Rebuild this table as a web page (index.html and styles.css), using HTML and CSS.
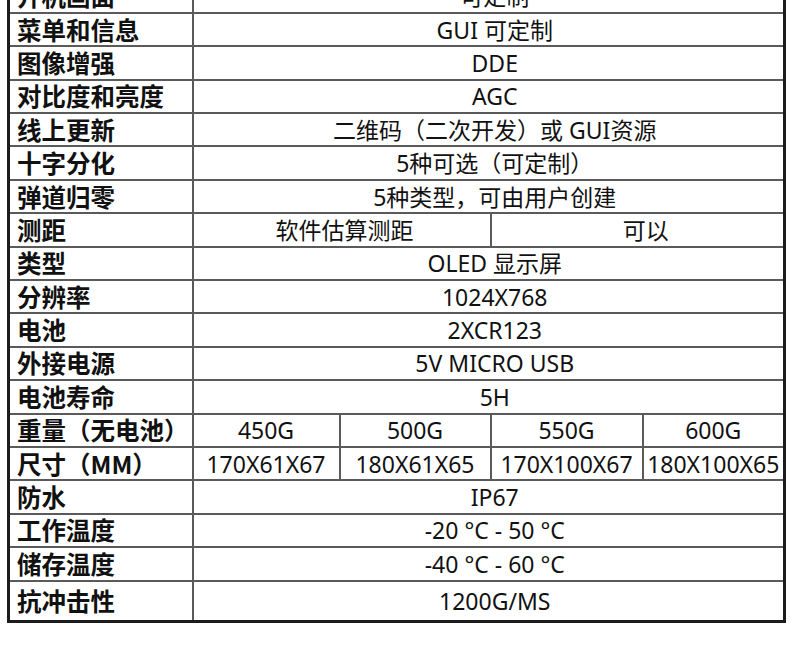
FILE: index.html
```html
<!DOCTYPE html>
<html lang="zh-CN">
<head>
<meta charset="utf-8">
<title>规格参数</title>
<link rel="stylesheet" href="styles.css">
</head>
<body>
<table class="spec">
  <colgroup>
    <col class="c-label">
    <col class="c1">
    <col class="c2">
    <col class="c3">
    <col class="c4">
  </colgroup>
  <tbody>
    <tr><th>开机画面</th><td colspan="4" class="full">可定制</td></tr>
    <tr><th>菜单和信息</th><td colspan="4" class="full">GUI 可定制</td></tr>
    <tr><th>图像增强</th><td colspan="4" class="full">DDE</td></tr>
    <tr><th>对比度和亮度</th><td colspan="4" class="full">AGC</td></tr>
    <tr><th>线上更新</th><td colspan="4" class="full">二维码（二次开发）或 GUI资源</td></tr>
    <tr><th>十字分化</th><td colspan="4" class="full">5种可选（可定制）</td></tr>
    <tr><th>弹道归零</th><td colspan="4" class="full">5种类型，可由用户创建</td></tr>
    <tr><th>测距</th><td colspan="2" class="half">软件估算测距</td><td colspan="2" class="half2">可以</td></tr>
    <tr><th>类型</th><td colspan="4" class="full">OLED 显示屏</td></tr>
    <tr><th>分辨率</th><td colspan="4" class="full">1024X768</td></tr>
    <tr><th>电池</th><td colspan="4" class="full">2XCR123</td></tr>
    <tr><th>外接电源</th><td colspan="4" class="full">5V MICRO USB</td></tr>
    <tr><th>电池寿命</th><td colspan="4" class="full">5H</td></tr>
    <tr><th>重量（无电池）</th><td>450G</td><td>500G</td><td>550G</td><td>600G</td></tr>
    <tr><th>尺寸（MM）</th><td>170X61X67</td><td>180X61X65</td><td>170X100X67</td><td>180X100X65</td></tr>
    <tr><th>防水</th><td colspan="4" class="full">IP67</td></tr>
    <tr><th>工作温度</th><td colspan="4" class="full">-20 °C - 50 °C</td></tr>
    <tr><th>储存温度</th><td colspan="4" class="full">-40 °C - 60 °C</td></tr>
    <tr class="last"><th>抗冲击性</th><td colspan="4" class="full">1200G/MS</td></tr>
  </tbody>
</table>
</body>
</html>
```

FILE: styles.css
```css
html, body {
  margin: 0;
  padding: 0;
  background: #ffffff;
}

body {
  overflow: hidden;
}

.spec {
  margin: -22px 0 0 7px;
  width: 776px;
  table-layout: fixed;
  border-collapse: collapse;
  border: 3px solid #1c1c1c;
  color: #111111;
}

.c-label { width: 184px; }
.c1 { width: 147px; }
.c2 { width: 151px; }
.c3 { width: 152px; }
.c4 { width: 142px; }

.spec tr {
  height: 33.4px;
}

.spec tr.last {
  height: 41px;
}

.spec th,
.spec td {
  border: 2px solid #5a5a5a;
  padding: 0;
  line-height: 28px;
  white-space: nowrap;
  overflow: hidden;
}

.spec th {
  text-align: left;
  padding-left: 7px;
  font-family: "Noto Sans CJK SC", "Noto Sans", sans-serif;
  font-weight: 700;
  font-size: 24.5px;
}

.spec td {
  text-align: center;
  font-family: "Noto Sans", "Noto Sans CJK SC", sans-serif;
  font-weight: 400;
  font-size: 23px;
}

.spec td.full {
  padding-left: 13px;
}

.spec td.half {
  padding-left: 6px;
}

.spec td.half2 {
  padding-left: 17px;
}
```
